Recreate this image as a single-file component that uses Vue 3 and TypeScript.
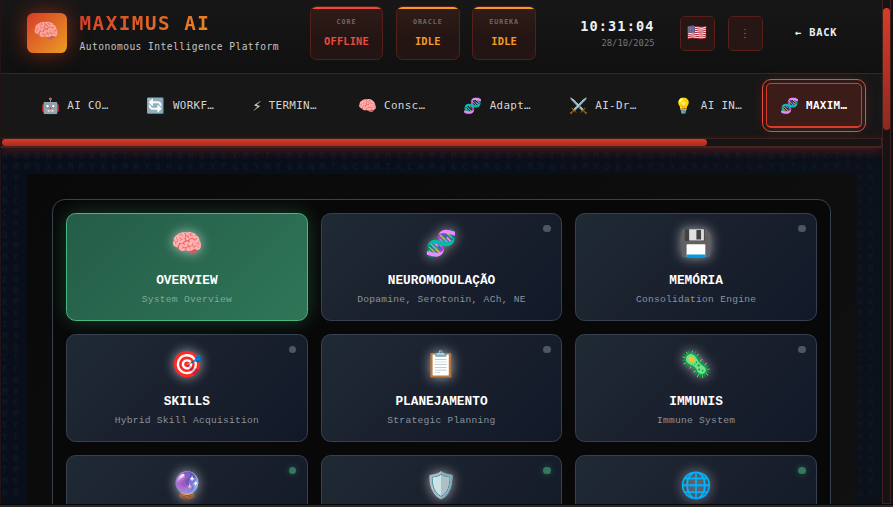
<script setup lang="ts">
interface Status { label: string; value: string; tone: 'offline' | 'idle' }
interface NavItem { icon: string; label: string; active?: boolean }
interface Card { icon: string; title?: string; sub?: string; dot?: 'idle' | 'live'; active?: boolean }

const statuses: Status[] = [
  { label: 'CORE', value: 'OFFLINE', tone: 'offline' },
  { label: 'ORACLE', value: 'IDLE', tone: 'idle' },
  { label: 'EUREKA', value: 'IDLE', tone: 'idle' },
]

const nav: NavItem[] = [
  { icon: '🤖', label: 'AI CO…' },
  { icon: '🔄', label: 'WORKF…' },
  { icon: '⚡︎', label: 'TERMIN…' },
  { icon: '🧠', label: 'Consc…' },
  { icon: '🧬', label: 'Adapt…' },
  { icon: '⚔️', label: 'AI-Dr…' },
  { icon: '💡', label: 'AI IN…' },
  { icon: '🧬', label: 'MAXIM…', active: true },
]

const cards: Card[] = [
  { icon: '🧠', title: 'OVERVIEW', sub: 'System Overview', active: true },
  { icon: '🧬', title: 'NEUROMODULAÇÃO', sub: 'Dopamine, Serotonin, ACh, NE', dot: 'idle' },
  { icon: '💾', title: 'MEMÓRIA', sub: 'Consolidation Engine', dot: 'idle' },
  { icon: '🎯', title: 'SKILLS', sub: 'Hybrid Skill Acquisition', dot: 'idle' },
  { icon: '📋', title: 'PLANEJAMENTO', sub: 'Strategic Planning', dot: 'idle' },
  { icon: '🦠', title: 'IMMUNIS', sub: 'Immune System', dot: 'idle' },
  { icon: '🔮', dot: 'live' },
  { icon: '🛡️', dot: 'live' },
  { icon: '🌐', dot: 'live' },
]

// Faint letter rain around the panel, seeded so every load looks the same
const glyphs = 'MXRTNKMHYGMCQ'
const rows = (count: number, length: number, seed: number): string[] =>
  Array.from({ length: count }, (_, r) =>
    Array.from({ length }, (_, c) => glyphs[(r * 7 + c * 5 + seed + ((r * c) % 4)) % glyphs.length]).join(''),
  )
const rainTop = rows(2, 80, 0)
const rainLeft = rows(29, 2, 3)
const rainRight = rows(29, 2, 8)
</script>

<template>
  <div class="screen">
    <div class="window">
      <div class="view">
        <header class="top">
          <div class="logo"><span>🧠</span></div>
          <div class="brand">
            <h1>MAXIMUS AI</h1>
            <p>Autonomous Intelligence Platform</p>
          </div>
          <div class="statuses">
            <div v-for="s in statuses" :key="s.label" class="status" :class="s.tone">
              <span class="s-label">{{ s.label }}</span>
              <span class="s-value">{{ s.value }}</span>
            </div>
          </div>
          <div class="clock">
            <strong>10:31:04</strong>
            <span>28/10/2025</span>
          </div>
          <button class="sq flag">🇺🇸</button>
          <button class="sq more">
            <svg width="4" height="14" viewBox="0 0 4 14"><circle cx="2" cy="2.5" r=".8" /><circle cx="2" cy="6.5" r=".8" /><circle cx="2" cy="10.5" r=".8" /></svg>
          </button>
          <span class="back">← BACK</span>
        </header>
        <nav class="tabs">
          <div v-for="n in nav" :key="n.label" class="tab" :class="{ active: n.active }">
            <span class="t-icon">{{ n.icon }}</span>
            <span>{{ n.label }}</span>
          </div>
        </nav>
        <div class="hbar"><div class="hthumb"></div></div>
        <main class="content">
          <div class="rain rain-top"><div v-for="(line, i) in rainTop" :key="i">{{ line }}</div></div>
          <div class="body">
            <div class="rain rain-side"><div v-for="(line, i) in rainLeft" :key="i">{{ line }}</div></div>
            <section class="panel">
              <div class="grid">
                <article v-for="c in cards" :key="c.icon" class="card" :class="{ active: c.active }">
                  <i v-if="c.dot" class="dot" :class="c.dot"></i>
                  <span class="c-icon">{{ c.icon }}</span>
                  <h2 v-if="c.title">{{ c.title }}</h2>
                  <p v-if="c.sub">{{ c.sub }}</p>
                </article>
              </div>
            </section>
            <div class="rain rain-side"><div v-for="(line, i) in rainRight" :key="i">{{ line }}</div></div>
          </div>
        </main>
      </div>
      <div class="vbar"><div class="vthumb"></div></div>
      <div class="edge"></div>
    </div>
    <footer class="bottom"></footer>
  </div>
</template>

<style>
html, body { margin: 0; overflow: hidden; background: #090909; }
</style>

<style scoped>
* { box-sizing: border-box; margin: 0; padding: 0; }
.screen { width: 893px; height: 507px; display: flex; flex-direction: column; overflow: hidden; background: #0a0a0a; font-family: "DejaVu Sans Mono", "Noto Color Emoji", monospace; }
.window { height: 504px; display: flex; border-left: 1px solid #211413; overflow: hidden; flex: none; }
.view { width: 881px; flex: none; display: flex; flex-direction: column; overflow: hidden; }
.top { height: 74px; flex: none; display: flex; align-items: flex-start; padding-left: 26px; background: linear-gradient(180deg, #171717, #101010); border-bottom: 1px solid #4a1f1b; white-space: nowrap; }
.logo { width: 40px; height: 40px; flex: none; margin-top: 13px; border-radius: 6.4px; display: flex; align-items: center; justify-content: center; background: linear-gradient(135deg, #d63c28, #ea9d25); box-shadow: 0 0 20px rgba(220, 60, 30, .55); font-size: 20.8px; line-height: 1; }
.logo span { opacity: .85; margin: -3px 0 0 -1px; }
.brand { width: 231px; flex: none; margin-left: 12.5px; padding-top: 12px; }
.brand h1 { width: max-content; font-size: 19.2px; line-height: 23px; letter-spacing: 1.54px; font-weight: 700; background: linear-gradient(135deg, #d63c28, #ea8a22); background-clip: text; -webkit-background-clip: text; color: transparent; }
.brand p { margin-top: 5px; font-size: 9.6px; line-height: 14px; letter-spacing: .46px; color: #c4c4c4; }
.statuses { display: flex; flex: none; gap: 12.8px; padding-top: 6px; width: 226px; }
.status { position: relative; min-width: 63.6px; height: 54px; padding: 11px 12.8px 0; display: flex; flex-direction: column; align-items: center; overflow: hidden; border: 1px solid #552019; border-radius: 6.4px; background: linear-gradient(180deg, #301c17, #231513 60%); }
.status::before { content: ''; position: absolute; top: 0; left: 0; right: 0; height: 2px; background: currentColor; }
.status:first-child { width: 73px; margin-right: .2px; }
.offline { color: #e74c3c; margin-left: -.5px; }
.idle { color: #f39c23; }
.s-label { font-size: 6.72px; line-height: 8px; letter-spacing: .9px; font-weight: 700; color: #6c6867; }
.s-value { margin-top: 9px; font-size: 10.4px; line-height: 12px; letter-spacing: .15px; font-weight: 700; }
.clock { width: 118px; flex: none; padding-top: 18px; display: flex; flex-direction: column; text-align: right; }
.clock strong { font-size: 13.6px; line-height: 17px; letter-spacing: 1.1px; color: #ecf0f8; }
.clock span { margin-top: 3px; font-size: 8.8px; line-height: 11px; color: #777; }
.sq { width: 35px; height: 35px; flex: none; margin: 16px 0 0 25px; display: flex; align-items: center; justify-content: center; border: 1px solid #5a1f1a; border-radius: 4.8px; background: #261614; font: 16px "Noto Color Emoji", sans-serif; line-height: 1; }
.flag { padding-bottom: 1px; }
.more { margin-left: 13px; }
.more svg { fill: #d0392a; }
.back { margin: 26px 0 0 32.6px; font-size: 10.4px; line-height: 13px; font-weight: 700; letter-spacing: .8px; color: #ecf0f8; }
.tabs { height: 64px; flex: none; display: flex; gap: 9.6px; padding: 9px 0 0 26px; background: #171717; }
.tab { width: 96px; height: 45px; flex: none; display: flex; align-items: center; gap: 7.2px; padding-left: 13.2px; border: 1px solid transparent; border-radius: 5px; font-size: 10.88px; letter-spacing: .33px; color: #d4d4d4; white-space: nowrap; }
.t-icon { font-size: 15.2px; line-height: 18px; letter-spacing: 0; }
.tab.active { background: #3b1c19; border-color: #d63c28; border-bottom-width: 2px; padding-top: 1px; padding-left: 12.8px; color: #fff; font-weight: 700; outline: 1px solid #e74c3c; outline-offset: 3px; box-shadow: 0 0 14px rgba(214, 60, 40, .35); }
.hbar { height: 10px; flex: none; background: #151515; border: 1px solid #40201c; border-bottom: 2px solid #4a211d; border-left: 0; z-index: 2; box-shadow: 0 3px 10px rgba(150, 40, 28, .45); }
.hthumb { width: 705px; height: 7px; margin-left: 1px; border-radius: 4px; background: linear-gradient(180deg, #d63c28, #a52b20); }
.content { flex: 1; min-height: 0; display: flex; flex-direction: column; overflow: hidden; background: linear-gradient(90deg, #080f1a, #0b101a); }
.rain { flex: none; overflow: hidden; font-size: 9px; line-height: 11.2px; letter-spacing: 5.53px; white-space: pre; font-weight: 700; color: #101722; }
.rain-top { height: 26px; padding: 3px 0 0 1px; }
.rain-side { width: 26px; padding: 0 0 0 1px; }
.body { flex: 1; min-height: 0; display: flex; }
.panel { width: 829px; flex: none; height: 620px; padding: 25px; background: linear-gradient(135deg, #090909, #121212); }
.grid { height: 580px; display: grid; grid-template-columns: repeat(3, 1fr); grid-auto-rows: 108.2px; gap: 12.8px; padding: 13px; border: 1px solid #37414f; border-radius: 12.8px; background: #080808; }
.card { position: relative; display: flex; flex-direction: column; align-items: center; padding-top: 15px; border: 1px solid #374151; border-radius: 9.6px; background: linear-gradient(135deg, #1f2a34, #1a202d 50%, #111827); font-family: "Liberation Mono", "Noto Color Emoji", monospace; }
.card.active { border-color: #48b884; background: linear-gradient(135deg, #255c48, #2e7657); box-shadow: 0 0 20px rgba(52, 180, 110, .3); }
.c-icon { font-size: 25.6px; line-height: 34px; height: 34px; filter: drop-shadow(0 0 6px rgba(255, 255, 255, .6)); }
.card h2 { margin-top: 10px; height: 16px; font-size: 12.8px; line-height: 16px; font-weight: 700; color: #fff; }
.card p { margin-top: 5px; font-size: 9.6px; line-height: 12px; letter-spacing: .26px; color: #8a929d; }
.card.active p { color: #86a59a; }
.dot { position: absolute; top: 10.6px; right: 10.4px; width: 7.7px; height: 7.7px; border-radius: 50%; }
.dot.idle { background: #4f5663; }
.dot.live { background: #34785d; box-shadow: 0 0 6px rgba(52, 150, 105, .5); }
.vbar { width: 9px; flex: none; padding-top: 8px; border: 1px solid #40201c; border-top: 0; background: #151313; }
.vthumb { height: 122px; border-radius: 4px; background: linear-gradient(180deg, #d63c28, #8e281f); }
.edge { width: 2px; flex: none; background: #111; }
.bottom { height: 3px; flex: none; border-top: 1px solid #080808; background: #2a2929; }
</style>
